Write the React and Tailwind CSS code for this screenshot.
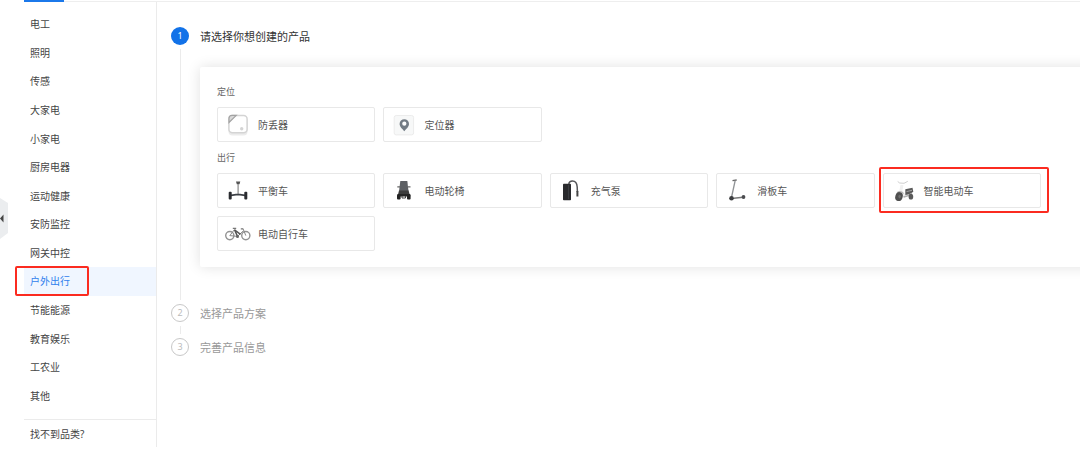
import React from "react";

const categories = [
  "电工", "照明", "传感", "大家电", "小家电", "厨房电器", "运动健康",
  "安防监控", "网关中控", "户外出行", "节能能源", "教育娱乐", "工农业", "其他",
];

function Art({ children }) {
  return (
    <svg viewBox="0 0 26 26" aria-hidden="true" className="size-[26px] shrink-0 overflow-visible" fill="none">
      {children}
    </svg>
  );
}

function TagArt() {
  return (
    <Art>
      <rect x="4.5" y="5.5" width="19" height="18" rx="4" fill="#ececec" />
      <rect x="4.9" y="3.4" width="18.2" height="17.4" rx="3.5" fill="#fff" stroke="#d4d4d4" strokeWidth="1.5" />
      <path d="M5 10.5V6.2Q5 3.4 8 3.4h4.2z" fill="#d9d9d9" stroke="#a3a3a3" strokeWidth="1.2" />
      <circle cx="17.7" cy="16.8" r="1.7" fill="#d4d4d4" />
    </Art>
  );
}

function LocatorArt() {
  return (
    <Art>
      <rect x="4.2" y="3.5" width="19.4" height="19.4" rx="2" fill="#f7f8f8" stroke="#ececec" strokeWidth="1" />
      <path d="M14.3 7.2a4.7 4.7 0 0 0-4.7 4.7c0 3 3 5 4.7 7.3 1.7-2.3 4.7-4.3 4.7-7.3a4.7 4.7 0 0 0-4.7-4.7z" fill="#737c85" />
      <circle cx="14.3" cy="11.7" r="2.1" fill="#fff" />
    </Art>
  );
}

function BalanceArt() {
  return (
    <Art>
      <path d="M12 3.5h4.3l-.8 2.8h-2.7z" fill="#555" />
      <path d="M14.1 6v10.5" stroke="#888" strokeWidth="1.2" />
      <path d="M7 17.3l5-.6h4l5 .6" stroke="#3c4046" strokeWidth="1.7" />
      <rect x="4.7" y="13.8" width="3" height="7.6" rx="1" fill="#2a2c30" />
      <rect x="20.3" y="13.8" width="3" height="7.6" rx="1" fill="#2a2c30" />
    </Art>
  );
}

function WheelchairArt() {
  return (
    <Art>
      <path d="M10.3 3h7l1.2 10H9.1z" fill="#5c5f63" />
      <path d="M7.3 8.8H10M17.7 8.8h2.8" stroke="#666" strokeWidth="1.3" />
      <path d="M9 12.5h9.6l1 4H8z" fill="#3c3c3c" />
      <path d="M7.5 16h12.7v2.500H7.500z" fill="#252525" />
      <rect x="7" y="16.500" width="3.600" height="5" rx="1" fill="#222" />
      <rect x="17" y="16.500" width="3.600" height="5" rx="1" fill="#222" />
      <path d="M12 18v2h3.500v-2" stroke="#444" strokeWidth="1" />
    </Art>
  );
}

function PumpArt() {
  return (
    <Art>
      <rect x="6" y="5.8" width="8" height="16.4" rx=".8" fill="#292a2d" />
      <path d="M11.500 7v14" stroke="#404246" strokeWidth=".8" />
      <path d="M11.800 6c.3-2 1.700-3 3.600-3 3.200 0 4.600 2.500 4.800 6l.2 5" stroke="#555659" strokeWidth="1.500" />
      <path d="M20.400 13v5.500" stroke="#444" strokeWidth="2" />
    </Art>
  );
}

function KickScooterArt() {
  return (
    <Art>
      <path d="M9.500 2.600l4.200-.6" stroke="#666" strokeWidth="1.300" />
      <path d="M12.200 2.500L8.600 19" stroke="#909396" strokeWidth="1.300" />
      <path d="M8.500 20.500l11.500-1.200" stroke="#777" strokeWidth="1.500" />
      <circle cx="8.500" cy="20.300" r="2.300" fill="#3c3d3f" />
      <circle cx="20.500" cy="19" r="1.900" fill="#4b4c4f" />
    </Art>
  );
}

function MopedArt() {
  return (
    <Art>
      <path d="M7.700 3.500l2 1.500 4.300.3 3.800-2" stroke="#d0d0d0" strokeWidth="1" />
      <path d="M12 7l-1.200 6 4.500 6" stroke="#f0f0f0" strokeWidth="3" />
      <path d="M7.500 14.200q3.500-1.500 6 1.500" stroke="#b5b5b5" strokeWidth="1.200" />
      <ellipse cx="9" cy="18.600" rx="3.700" ry="4.500" fill="#505050" transform="rotate(18 9 18.600)" />
      <ellipse cx="9.600" cy="18.600" rx="1.200" ry="1.800" fill="#707070" />
      <path d="M15.300 11.300l7.200-1.600.8 4-3.500 2.600-4.500.7z" fill="#5a5a5a" />
      <path d="M16.500 13.600l5.500-1.300" stroke="#aaa" strokeWidth=".9" />
      <path d="M13.500 19l5-1.500 3.500-2" stroke="#b0b0b0" strokeWidth="1.600" />
      <ellipse cx="20.900" cy="18.700" rx="2.300" ry="2.900" fill="#5a5a5a" />
    </Art>
  );
}

function BicycleArt() {
  return (
    <Art>
      <circle cx="5.800" cy="14.600" r="4.100" stroke="#939393" strokeWidth="1.400" />
      <circle cx="21.800" cy="14.600" r="4.100" stroke="#939393" strokeWidth="1.400" />
      <path d="M5.800 14.600l4.700-6.100M5.800 14.600l7.700.8M13.500 15.400l6-5.700M21.800 14.600l-2.800-7" stroke="#8a8a8a" strokeWidth="1" />
      <path d="M10.500 8.800l3 6.600M10.800 9l5.700 4.300" stroke="#555" strokeWidth="1.500" />
      <path d="M8.800 7.300h3.400M16.800 7.900h2.400" stroke="#777" strokeWidth="1.200" />
      <circle cx="13.500" cy="15.400" r="1.500" fill="#666" />
    </Art>
  );
}

const groups = [
  {
    title: "定位",
    products: [
      { name: "防丢器", art: TagArt },
      { name: "定位器", art: LocatorArt },
    ],
  },
  {
    title: "出行",
    products: [
      { name: "平衡车", art: BalanceArt },
      { name: "电动轮椅", art: WheelchairArt },
      { name: "充气泵", art: PumpArt },
      { name: "滑板车", art: KickScooterArt },
      { name: "智能电动车", art: MopedArt, marked: true },
      { name: "电动自行车", art: BicycleArt },
    ],
  },
];

function ProductCard({ name, art: Drawing, marked }) {
  return (
    <div className="relative">
      <button type="button" className="flex h-[35px] w-full items-center gap-2 rounded-xs border border-[#e8e8e8] bg-white pl-1.5 text-left text-[10px] text-[#555]">
        <Drawing />
        <span className="pt-0.5">{name}</span>
      </button>
      {marked && (
        <span className="pointer-events-none absolute -top-1.5 -right-2 -bottom-[5px] -left-1 rounded-xs border-2 border-[#fb2b20]" />
      )}
    </div>
  );
}

function Step({ number, title, active, last, children }) {
  return (
    <li className="flex gap-[11px]">
      <div className="flex w-[18px] shrink-0 flex-col items-center">
        <span
          className={
            active
              ? "flex size-[18px] shrink-0 items-center justify-center rounded-full bg-[#1272e8] text-[9px] text-white"
              : "flex size-[18px] shrink-0 items-center justify-center rounded-full border border-[#c8c8c8] text-[9px] text-[#bbb]"
          }
        >
          {number}
        </span>
        {!last && <span className="my-1 w-px flex-1 bg-[#ebebeb]" />}
      </div>
      <div className={active ? "min-w-0 flex-1 pb-[37px]" : last ? "min-w-0 flex-1" : "min-w-0 flex-1 pb-3.5"}>
        <h2 className={active ? "text-[11px] leading-5 text-[#333]" : "text-[11px] leading-5 text-[#999]"}>
          {title}
        </h2>
        {children}
      </div>
    </li>
  );
}

export default function App() {
  return (
    <div className="relative min-h-screen overflow-hidden bg-white font-['Noto_Sans','Noto_Sans_CJK_SC',sans-serif]">
      <header className="ml-6 flex h-0.5 border-b border-[#eee]">
        <span className="h-0.5 w-10 shrink-0 bg-[#1b78ea]" />
      </header>

      <button type="button" aria-label="收起" className="absolute top-[196px] left-0 h-11 w-2">
        <svg viewBox="0 0 8 44" className="h-11 w-2" aria-hidden="true">
          <path d="M0 2l8 5v30l-8 6z" fill="#ebedef" />
          <path d="M3.500 18.500v8L0 22.500z" fill="#444" />
        </svg>
      </button>

      <div className="flex items-start">
        <nav className="ml-6 w-[133px] shrink-0 border-r border-[#ebebeb] pt-2">
          <ul className="flex min-h-[400px] flex-col text-[10px] text-[#444]">
            {categories.map((name) => {
              const selected = name === "户外出行";
              return (
                <li key={name} className={selected ? "relative flex flex-1 bg-[#f0f6ff] text-[#2f80ed]" : "flex flex-1"}>
                  <a href="#" aria-current={selected ? "page" : undefined} className="flex flex-1 items-center pt-px pl-1.5">
                    {name}
                  </a>
                  {selected && (
                    <span className="pointer-events-none absolute -top-px -left-[9px] bottom-0 w-[74px] rounded-xs border-2 border-[#fb2b20]" />
                  )}
                </li>
              );
            })}
          </ul>
          <a href="#" className="mt-[9px] flex h-7 items-center border-t border-[#ebebeb] pt-px pl-1.5 text-[10px] text-[#444]">
            找不到品类?
          </a>
        </nav>

        <main className="min-w-0 flex-1 pt-[25px] pl-3.5">
          <ol>
            <Step number={1} title="请选择你想创建的产品" active>
              <div className="mt-5 -mr-4 rounded-l-xs bg-white pt-[9px] pr-[55px] pb-4 pl-[17px] shadow-[0_0_14px_rgba(0,0,0,0.12)]">
                {groups.map((group) => (
                  <section key={group.title}>
                    <h3 className="text-[9px] leading-[31px] text-[#666]">{group.title}</h3>
                    <div className="grid grid-cols-5 gap-2">
                      {group.products.map((product) => (
                        <ProductCard key={product.name} {...product} />
                      ))}
                    </div>
                  </section>
                ))}
              </div>
            </Step>
            <Step number={2} title="选择产品方案" />
            <Step number={3} title="完善产品信息" last />
          </ol>
        </main>
      </div>
    </div>
  );
}
